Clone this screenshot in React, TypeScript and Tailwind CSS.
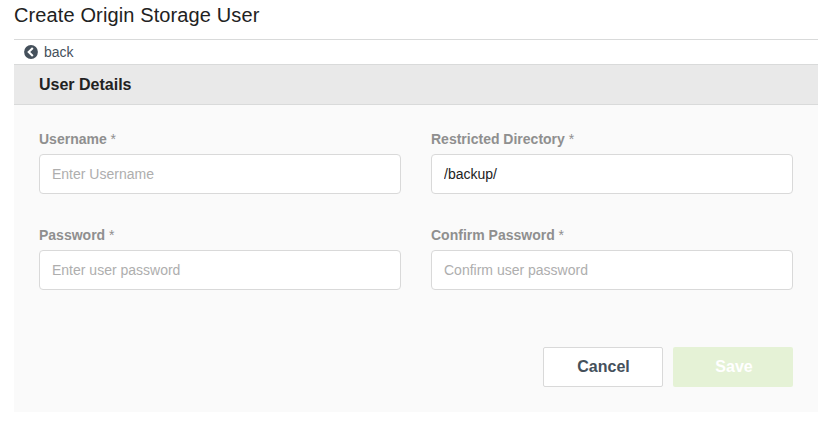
import React from "react";

type FieldProps = {
  label: string;
  placeholder?: string;
  value?: string;
};

function Field({ label, placeholder, value }: FieldProps) {
  return (
    <label className="flex flex-col">
      <span className="h-[19px] text-sm leading-[20px] font-bold text-[#8f8f8f]">
        {label} <span className="font-normal">*</span>
      </span>
      <input
        type="text"
        defaultValue={value}
        placeholder={placeholder}
        className="mt-[6px] h-10 w-full rounded-[4px] border border-[#d9d9d9] bg-white px-3 text-sm text-[#222222] outline-none placeholder:text-[#aeaeae]"
      />
    </label>
  );
}

export default function App() {
  return (
    <div className="h-[424px] w-[835px] overflow-hidden bg-white pr-[17px] pl-[14px] font-['Liberation_Sans',Arial,sans-serif] text-[#222222]">
      <h1 className="h-[39px] pt-[3px] text-xl leading-6 font-normal tracking-[0.12px]">Create Origin Storage User</h1>
      <div className="flex h-[25px] items-center gap-1.5 border-t border-[#d9dada] pl-[10px] text-sm text-[#45505b]">
        <svg viewBox="0 0 14 14" className="size-[14px]" fill="none">
          <circle cx="7" cy="7" r="6.9" fill="#45505b" />
          <path d="M8.800 2.900L4.700 7l4.100 4.100" stroke="white" strokeWidth="2.100" />
        </svg>
        <a>back</a>
      </div>
      <section className="h-[348px] bg-[#fafafa]">
        <h2 className="flex h-[41px] items-center border-y border-[#d9dada] bg-[#e9e9e9] pl-[25px] text-base font-bold">
          User Details
        </h2>
        <form className="px-[25px] pt-6">
          <div className="grid grid-cols-2 gap-x-[30px] gap-y-[31px]">
            <Field label="Username" placeholder="Enter Username" />
            <Field label="Restricted Directory" value="/backup/" />
            <Field label="Password" placeholder="Enter user password" />
            <Field label="Confirm Password" placeholder="Confirm user password" />
          </div>
          <div className="mt-[57px] flex justify-end gap-[10px]">
            <button type="button" className="h-10 w-[120px] rounded-[2px] border border-[#d9d9d9] bg-white pl-px text-base font-bold text-[#45505b]">
              Cancel
            </button>
            <button type="button" className="h-10 w-[120px] rounded-[2px] bg-[#e5f2d6] pl-[2px] text-base font-bold text-white">
              Save
            </button>
          </div>
        </form>
      </section>
    </div>
  );
}
